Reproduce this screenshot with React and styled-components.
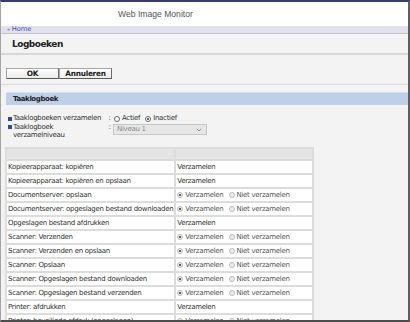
import React from "react";
import styled, { createGlobalStyle } from "styled-components";
import { ChevronDown } from "lucide-react";

const GlobalStyle = createGlobalStyle`
  html, body {
    margin: 0;
    padding: 0;
    background: #ffffff;
  }
  body {
    font-family: "DejaVu Sans", Verdana, sans-serif;
    color: #333;
  }
`;

const Frame = styled.div`
  box-sizing: border-box;
  width: 410px;
  height: 322px;
  overflow: hidden;
  border-top: 2px solid #363c6e;
  border-left: 1px solid #a4a4a4;
  border-right: 2px solid #5e5e5e;
  border-bottom: 2px solid #4c4c4c;
  background: #f3f3f3;
  display: flex;
  flex-direction: column;
`;

const Header = styled.div`
  height: 24px;
  flex: none;
  background: #fff;
  display: flex;
  align-items: center;
  padding-left: 117px;
  font-family: "Liberation Sans", Arial, sans-serif;
  font-size: 8.6px;
  color: #555;
`;

const HomeBar = styled.div`
  height: 7px;
  flex: none;
  background: #e2e2ee;
  border-bottom: 1px solid #c6c6c6;
  display: flex;
  align-items: center;
  gap: 2px;
  padding-left: 6px;
  font-size: 6.8px;
  line-height: 7px;
  letter-spacing: -0.2px;
  color: #3b55a5;
`;

const Crumb = styled.span`
  font-size: ${(p) => (p.small ? "5px" : "6.8px")};
`;

const TitleBlock = styled.div`
  height: 19px;
  flex: none;
  display: flex;
  align-items: center;
  padding-left: 11px;
  border-bottom: 2px solid #d6d6d6;
  font-size: 9px;
  font-weight: bold;
  letter-spacing: -0.5px;
  color: #222;
`;

const ButtonBar = styled.div`
  box-sizing: border-box;
  height: 30px;
  flex: none;
  display: flex;
  padding: 13px 0 0 5px;
  border-bottom: 1px solid #d9d9d9;
`;

const Button = styled.button`
  box-sizing: border-box;
  width: 53px;
  height: 11px;
  padding: 0;
  border: 1px solid #a6a6a6;
  border-right-color: #6a6a6a;
  border-bottom-color: #5a5a5a;
  background: linear-gradient(#ffffff, #ececec);
  font-family: inherit;
  font-size: 7.4px;
  font-weight: bold;
  letter-spacing: -0.3px;
  line-height: 9px;
  color: #222;
`;

const Section = styled.div`
  padding: 7px 0 0 5px;
  font-size: 7px;
  letter-spacing: -0.3px;
`;

const SectionBar = styled.div`
  box-sizing: border-box;
  height: 13px;
  display: flex;
  align-items: center;
  padding-left: 7px;
  background: #bed0e8;
  border-top: 1px solid #d6e2f2;
  font-weight: bold;
  letter-spacing: -0.4px;
  color: #222;
`;

const Settings = styled.div`
  padding: 9px 0 0 2px;
`;

const SettingRow = styled.div`
  display: grid;
  grid-template-columns: 4px 93px 5px auto;
  column-gap: 1px;
  align-items: start;
  line-height: ${(p) => (p.tight ? "8px" : "9px")};
`;

const BulletCell = styled.span`
  height: ${(p) => (p.tight ? "8px" : "9px")};
  display: flex;
  align-items: center;
  &::before {
    content: "";
    width: 4px;
    height: 4px;
    background: #2c4d8e;
  }
`;

const Label = styled.span`
  color: #333;
`;

const Colon = styled.span`
  text-align: center;
`;

const RadioGroup = styled.div`
  display: flex;
  align-items: center;
  height: ${(p) => (p.h ? `${p.h}px` : "auto")};
  padding-left: ${(p) => p.indent || 0}px;
`;

const RadioOption = styled.span`
  display: flex;
  align-items: center;
  gap: 2px;
  margin-right: 5px;
  color: ${(p) => (p.light ? "#555" : "#333")};
`;

const RadioDot = styled.span`
  box-sizing: border-box;
  width: 6px;
  height: 6px;
  border-radius: 50%;
  flex: none;
  border: 1px solid ${(p) => (p.light ? "#bcbcbc" : "#6a6a6a")};
  background: ${(p) => (p.light ? "#ededed" : "#fff")};
  display: flex;
  align-items: center;
  justify-content: center;
  &::after {
    content: "";
    width: 2px;
    height: 2px;
    border-radius: 50%;
    background: ${(p) => (p.checked ? "#333" : "transparent")};
  }
`;

const SelectBox = styled.div`
  box-sizing: border-box;
  margin-top: 1px;
  width: 94px;
  height: 11px;
  display: flex;
  align-items: center;
  justify-content: space-between;
  padding: 0 3px;
  background: #e6e6e6;
  border: 1px solid #c6c6c6;
  color: #8a8a8a;
  line-height: 9px;
  svg {
    color: #666;
  }
`;

const Table = styled.table`
  margin: 8px 0 0 -1px;
  border-collapse: separate;
  border-spacing: 2px;
  background: #dcdcdc;
  font-size: 7px;
  letter-spacing: -0.3px;
`;

const HeadCell = styled.th`
  padding: 0;
  background: #e4e4e4;
  width: ${(p) => p.w}px;
  vertical-align: top;
`;

const HeadFill = styled.div`
  height: 10px;
`;

const Cell = styled.td`
  padding: 0;
  background: #fff;
  vertical-align: top;
`;

const CellBody = styled.div`
  height: 12px;
  padding: 0 1px;
  display: flex;
  align-items: center;
  white-space: nowrap;
  overflow: hidden;
  line-height: 12px;
  color: #333;
`;

const rows = [
  ["Kopieerapparaat: kopiëren", "fixed"],
  ["Kopieerapparaat: kopiëren en opslaan", "fixed"],
  ["Documentserver: opslaan", "radio"],
  ["Documentserver: opgeslagen bestand downloaden", "radio"],
  ["Opgeslagen bestand afdrukken", "fixed"],
  ["Scanner: Verzenden", "radio"],
  ["Scanner: Verzenden en opslaan", "radio"],
  ["Scanner: Opslaan", "radio"],
  ["Scanner: Opgeslagen bestand downloaden", "radio"],
  ["Scanner: Opgeslagen bestand verzenden", "radio"],
  ["Printer: afdrukken", "fixed"],
  ["Printer: beveiligde afdruk (opgeslagen)", "radio"],
];

const Radio = ({ checked, light, children }) => (
  <RadioOption light={light}>
    <RadioDot checked={checked} light={light} />
    {children}
  </RadioOption>
);

const App = () => (
  <Frame>
    <GlobalStyle />
    <Header>Web Image Monitor</Header>
    <HomeBar>
      <Crumb small>«</Crumb>
      <Crumb>Home</Crumb>
    </HomeBar>
    <TitleBlock>Logboeken</TitleBlock>
    <ButtonBar>
      <Button>OK</Button>
      <Button>Annuleren</Button>
    </ButtonBar>
    <Section>
      <SectionBar>Taaklogboek</SectionBar>
      <Settings>
        <SettingRow>
          <BulletCell />
          <Label>Taaklogboeken verzamelen</Label>
          <Colon>:</Colon>
          <RadioGroup h={9} indent={1}>
            <Radio>Actief</Radio>
            <Radio checked>Inactief</Radio>
          </RadioGroup>
        </SettingRow>
        <SettingRow tight>
          <BulletCell tight />
          <Label>Taaklogboek verzamelniveau</Label>
          <Colon>:</Colon>
          <SelectBox>
            <span>Niveau 1</span>
            <ChevronDown size={8} strokeWidth={2} />
          </SelectBox>
        </SettingRow>
      </Settings>
      <Table>
        <thead>
          <tr>
            <HeadCell w={164}>
              <HeadFill />
            </HeadCell>
            <HeadCell w={136}>
              <HeadFill />
            </HeadCell>
          </tr>
        </thead>
        <tbody>
          {rows.map(([name, kind]) => (
            <tr key={name}>
              <Cell>
                <CellBody>{name}</CellBody>
              </Cell>
              <Cell>
                <CellBody>
                  {kind === "fixed" ? (
                    "Verzamelen"
                  ) : (
                    <RadioGroup>
                      <Radio light checked>Verzamelen</Radio>
                      <Radio light>Niet verzamelen</Radio>
                    </RadioGroup>
                  )}
                </CellBody>
              </Cell>
            </tr>
          ))}
        </tbody>
      </Table>
    </Section>
  </Frame>
);

export default App;
